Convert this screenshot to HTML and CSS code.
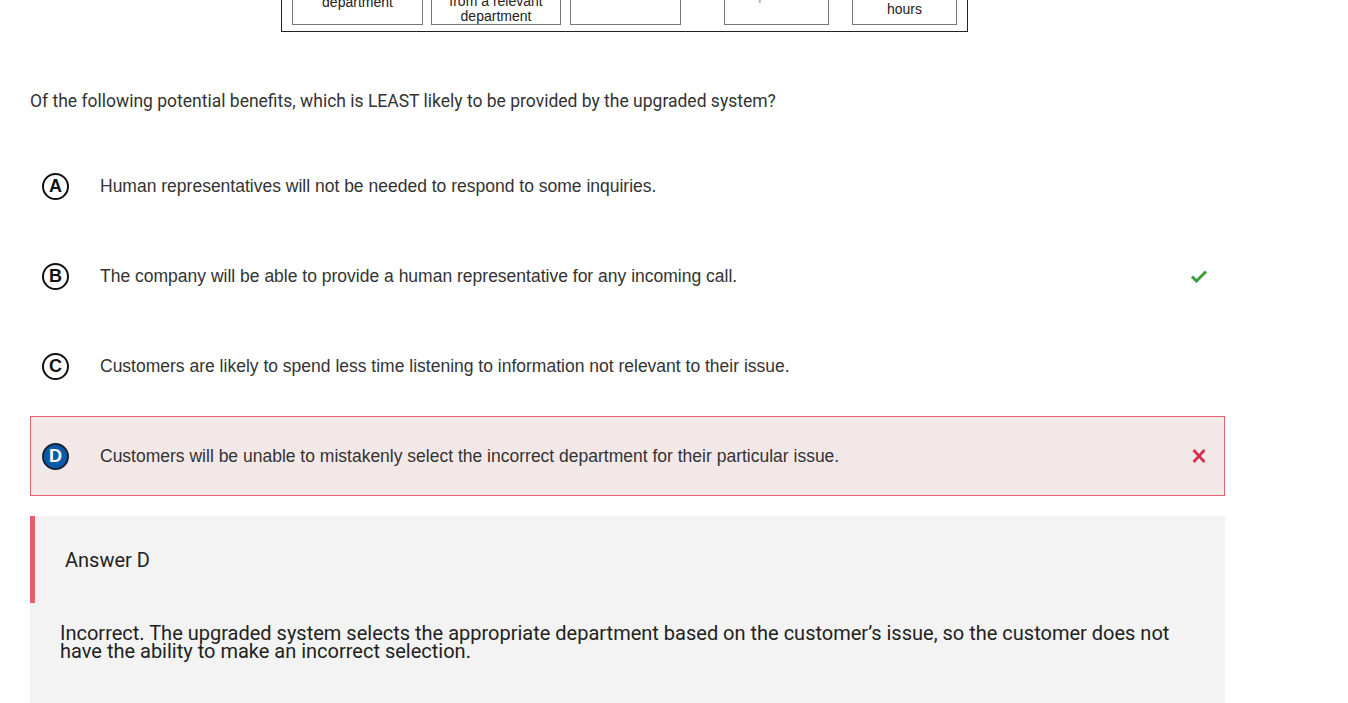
FILE: index.html
```html
<!DOCTYPE html>
<html>
<head>
<meta charset="utf-8">
<link rel="stylesheet" href="styles.css">
</head>
<body>
<div class="figure">
  <div class="fig-box b1"><span>Transfer to a<br>department</span></div>
  <div class="fig-box b2"><span>Receive a call<br>from a relevant<br>department</span></div>
  <div class="fig-box b3 faint"><span>the customer</span></div>
  <div class="fig-box b4 faint"><span>operator</span></div>
  <div class="fig-box b5"><span>business<br>hours</span></div>
</div>

<main class="content">
  <p class="question">Of the following potential benefits, which is LEAST likely to be provided by the upgraded system?</p>

  <div class="options">
    <div class="option">
      <span class="letter">A</span>
      <span class="opt-text">Human representatives will not be needed to respond to some inquiries.</span>
    </div>
    <div class="option">
      <span class="letter">B</span>
      <span class="opt-text">The company will be able to provide a human representative for any incoming call.</span>
      <svg class="mark" width="18" height="14" viewBox="0 0 18 14"><path d="M2 7.5 L6.5 12 L16 2.5" fill="none" stroke="#3f9b3a" stroke-width="3"/></svg>
    </div>
    <div class="option">
      <span class="letter">C</span>
      <span class="opt-text">Customers are likely to spend less time listening to information not relevant to their issue.</span>
    </div>
    <div class="option selected">
      <span class="letter">D</span>
      <span class="opt-text">Customers will be unable to mistakenly select the incorrect department for their particular issue.</span>
      <svg class="mark" width="18" height="14" viewBox="0 0 18 14"><path d="M3.5 1 L14.5 13 M14.5 1 L3.5 13" fill="none" stroke="#d0324a" stroke-width="2.6"/></svg>
    </div>
  </div>

  <section class="answer">
    <div class="answer-head">Answer D</div>
    <p class="explain">Incorrect. The upgraded system selects the appropriate department based on the customer’s issue, so the customer does not have the ability to make an incorrect selection.</p>
  </section>
</main>
</body>
</html>
```

FILE: styles.css
```css
html, body {
  margin: 0;
  padding: 0;
  background: #fff;
}
body {
  font-family: Roboto, "Liberation Sans", Arial, sans-serif;
  color: #333;
  overflow: hidden;
}
.figure {
  box-sizing: border-box;
  width: 687px;
  height: 90px;
  margin: -58px 0 0 281px;
  border: 1px solid #222;
  display: flex;
  align-items: flex-end;
  padding: 0 10px 6px 10px;
  font-family: "Liberation Sans", Arial, sans-serif;
  font-size: 14px;
  line-height: 15px;
  color: #222;
}
.fig-box {
  box-sizing: border-box;
  height: 70px;
  border: 1px solid #777;
  display: flex;
  align-items: flex-end;
  justify-content: center;
  text-align: center;
}
.b1 { width: 131px; padding-bottom: 14px; }
.b2 { width: 130px; margin-left: 8px; padding-bottom: 0; }
.b3 { width: 111px; margin-left: 9px; padding-bottom: 21px; }
.b4 { width: 105px; margin-left: 43px; padding-bottom: 21px; }
.b5 { width: 105px; margin-left: 23px; padding-bottom: 7px; }
.faint { color: #999; }

.content {
  width: 1195px;
  margin-left: 30px;
}
.question {
  margin: 59px 0 0 0;
  font-size: 17.5px;
  line-height: 20px;
  color: #333;
}
.options {
  margin-top: 35px;
  display: flex;
  flex-direction: column;
  gap: 10px;
}
.option {
  box-sizing: border-box;
  height: 80px;
  display: flex;
  align-items: center;
  padding-left: 11px;
  padding-right: 16px;
  border: 1px solid transparent;
  font-family: "Liberation Sans", Arial, sans-serif;
  font-size: 17.5px;
  color: #333;
}
.option.selected {
  background: #f3e8e8;
  border-color: #e5646f;
}
.letter {
  box-sizing: border-box;
  width: 27px;
  height: 27px;
  border: 2px solid #111;
  border-radius: 50%;
  display: flex;
  align-items: center;
  justify-content: center;
  font-weight: bold;
  font-size: 18px;
  color: #111;
  flex: none;
}
.selected .letter {
  background: #0b5aa8;
  border-color: #16233a;
  color: #fff;
}
.opt-text {
  margin-left: 31px;
  flex: 1;
}
.mark {
  flex: none;
}
.answer {
  margin-top: 20px;
  background: #f3f3f3;
  height: 200px;
}
.answer-head {
  box-sizing: border-box;
  height: 87px;
  border-left: 5px solid #e85f6c;
  padding-left: 30px;
  display: flex;
  align-items: center;
  font-size: 20px;
  color: #222;
}
.explain {
  margin: 0;
  padding: 21px 50px 0 30px;
  font-size: 20px;
  line-height: 18px;
  color: #222;
}
```
